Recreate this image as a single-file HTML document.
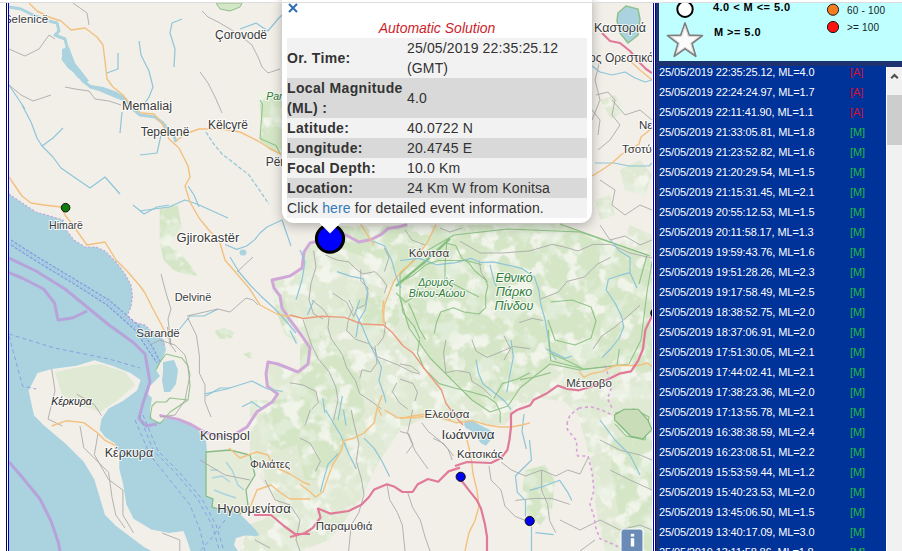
<!DOCTYPE html>
<html><head><meta charset="utf-8">
<style>
*{box-sizing:border-box}
html,body{margin:0;padding:0}
body{width:902px;height:551px;overflow:hidden;background:#fff;position:relative;font-family:"Liberation Sans",sans-serif}
.abs{position:absolute}
#topline{left:0;top:2px;width:902px;height:1px;background:#dcdcdc;z-index:10}
#map{left:9px;top:3px;width:643px;height:548px;background:#f2efe9;overflow:hidden}
#side{left:655px;top:3px;width:247px;height:548px;overflow:hidden}
#popup{left:282px;top:-10px;width:310px;height:233px;background:#fff;border-radius:12px;box-shadow:0 3px 12px rgba(0,0,0,0.28)}
#tip{left:321px;top:223px;width:18px;height:10px}
.ptab{position:absolute;left:287px;top:18px;width:300px;border-collapse:collapse;font-size:14px;line-height:20px;color:#333}
.ptab td{padding:0;vertical-align:middle}
.ptab td.k{width:120px;font-weight:bold;letter-spacing:0.35px}
.ptab td.v{letter-spacing:0.15px}
.ptab tr.l td{background:#f2f2f2}
.ptab tr.d td{background:#d9d9d9}
#list{left:659px;top:66px;width:243px;height:485px;background:#003399;overflow:hidden}
.row{position:absolute;left:0;height:20px;font-size:11px;line-height:20px;color:#fff;white-space:nowrap;letter-spacing:-0.13px}
.row b{font-weight:normal;position:absolute;left:191px;top:0}
.A{color:#d0103a}
.M{color:#22bb44}
</style></head>
<body>
<div id="topline" class="abs"></div>
<div class="abs" style="left:6px;top:3px;width:1px;height:548px;background:#000066"></div>
<div class="abs" style="left:8px;top:3px;width:1px;height:548px;background:#0000aa"></div>
<div id="map" class="abs">
<svg width="643" height="548" viewBox="9 3 643 548" style="position:absolute;left:0;top:0">
<path d="M310,243 L330,226 L560,224 L600,238 L648,257 L652,262 L652,551 L605,551 L596,510 L592,470 L585,440 L578,415 L565,402 L540,398 L520,405 L505,425 L470,425 L440,420 L420,420 L400,430 L380,460 L360,500 L330,540 L300,551 L240,551 L250,524 L262,520 L280,510 L290,470 L270,440 L247,427 L257,411.8 L272.5,401.7 L277.6,394 L267.4,386.4 L266,373.7 L268.7,361 L282.6,366 L298,373.7 L308,363.5 L310.6,348.3 L303,333 L292.8,320.3 L282.6,307.6 L280,296 L274,288 L272,280 L290,276 L302,268 L304,252 Z" fill="#e0e9d3"/>
<path d="M600,100 L615,95 L625,110 L612,120 Z" fill="#e0e9d3"/>
<path d="M620,170 L640,160 L652,175 L645,195 L625,190 Z" fill="#e0e9d3"/>
<path d="M595,200 L610,195 L615,215 L600,220 Z" fill="#e0e9d3"/>
<path d="M630,225 L652,235 L652,257 L620,245 Z" fill="#e0e9d3"/>
<path d="M250,400 L276,400 L290,420 L300,450 L300,500 L280,505 L262,480 L250,455 Z" fill="#e0e9d3"/>
<path d="M400,274 L418,256 L454,235 L508,229 L580,232 L648,257 L652,262 L652,380 L629,364 L580,370 L550,364 L520,388 L508,406 L490,412 L472,400 L454,382 L430,358 L409,328 L400,298 Z" fill="#d5e6c7"/>
<path d="M330,226 L560,224 L600,238 L648,257 L580,232 L508,229 L454,235 L418,256 L400,274 L380,262 L350,252 L330,244 Z" fill="#d5e6c7"/>
<path d="M300,345 L320,335 L345,350 L360,380 L365,410 L350,440 L335,460 L320,480 L305,480 L296,440 L300,400 Z" fill="#d5e6c7"/>
<path d="M340,300 L380,296 L396,300 L400,320 L390,335 L370,330 L350,320 Z" fill="#d5e6c7"/>
<path d="M610,440 L652,430 L652,551 L630,551 L620,520 L612,480 Z" fill="#d5e6c7"/>
<path d="M525,470 L545,465 L555,480 L552,510 L540,525 L528,515 L522,495 Z" fill="#d5e6c7"/>
<path d="M214,331 L224,328 L234,332 L232,338 L220,339 Z" fill="#d5e6c7"/>
<path d="M243,354 L250,352 L255,356 L250,359 Z" fill="#d5e6c7"/>
<path d="M159.7,209 L170,206 L178,205.4 L181.5,227 L176,235 L170.6,241.7 L180,252 L188.8,263.5 L197.8,276 L186,274 L174.2,270.7 L163.4,259.8 L159.7,241.7 Z" fill="#d5e6c7"/>
<path d="M258,91 L282,91 L282,156 L270,150 L260,141 L262,127 Z" fill="#d5e6c7"/>
<path d="M262,402 L290,398 L300,420 L296,445 L280,450 L265,440 Z" fill="#d5e6c7"/>
<path d="M272,290 L285,300 L292,330 L300,345 L285,335 L276,310 Z" fill="#d5e6c7"/>
<defs><filter id="mot" x="9" y="3" width="643" height="548" filterUnits="userSpaceOnUse"><feTurbulence type="fractalNoise" baseFrequency="0.06" numOctaves="3" seed="7"/><feColorMatrix type="matrix" values="0 0 0 0 0.949 0 0 0 0 0.937 0 0 0 0 0.914 7 0 0 0 -3.6"/></filter><clipPath id="gclip"><path d="M310,243 L330,226 L560,224 L600,238 L648,257 L652,262 L652,551 L605,551 L596,510 L592,470 L585,440 L578,415 L565,402 L540,398 L520,405 L505,425 L470,425 L440,420 L420,420 L400,430 L380,460 L360,500 L330,540 L300,551 L240,551 L250,524 L262,520 L280,510 L290,470 L270,440 L247,427 L257,411.8 L272.5,401.7 L277.6,394 L267.4,386.4 L266,373.7 L268.7,361 L282.6,366 L298,373.7 L308,363.5 L310.6,348.3 L303,333 L292.8,320.3 L282.6,307.6 L280,296 L274,288 L272,280 L290,276 L302,268 L304,252 Z"/><path d="M600,100 L615,95 L625,110 L612,120 Z"/><path d="M620,170 L640,160 L652,175 L645,195 L625,190 Z"/><path d="M595,200 L610,195 L615,215 L600,220 Z"/><path d="M630,225 L652,235 L652,257 L620,245 Z"/><path d="M250,400 L276,400 L290,420 L300,450 L300,500 L280,505 L262,480 L250,455 Z"/><path d="M400,274 L418,256 L454,235 L508,229 L580,232 L648,257 L652,262 L652,380 L629,364 L580,370 L550,364 L520,388 L508,406 L490,412 L472,400 L454,382 L430,358 L409,328 L400,298 Z"/><path d="M330,226 L560,224 L600,238 L648,257 L580,232 L508,229 L454,235 L418,256 L400,274 L380,262 L350,252 L330,244 Z"/><path d="M300,345 L320,335 L345,350 L360,380 L365,410 L350,440 L335,460 L320,480 L305,480 L296,440 L300,400 Z"/><path d="M340,300 L380,296 L396,300 L400,320 L390,335 L370,330 L350,320 Z"/><path d="M610,440 L652,430 L652,551 L630,551 L620,520 L612,480 Z"/><path d="M525,470 L545,465 L555,480 L552,510 L540,525 L528,515 L522,495 Z"/><path d="M214,331 L224,328 L234,332 L232,338 L220,339 Z"/><path d="M243,354 L250,352 L255,356 L250,359 Z"/><path d="M159.7,209 L170,206 L178,205.4 L181.5,227 L176,235 L170.6,241.7 L180,252 L188.8,263.5 L197.8,276 L186,274 L174.2,270.7 L163.4,259.8 L159.7,241.7 Z"/><path d="M258,91 L282,91 L282,156 L270,150 L260,141 L262,127 Z"/><path d="M262,402 L290,398 L300,420 L296,445 L280,450 L265,440 Z"/><path d="M272,290 L285,300 L292,330 L300,345 L285,335 L276,310 Z"/></clipPath></defs>
<rect x="9" y="3" width="643" height="548" filter="url(#mot)" clip-path="url(#gclip)" opacity="0.75"/>
<defs><filter id="mot2" x="9" y="3" width="643" height="548" filterUnits="userSpaceOnUse"><feTurbulence type="fractalNoise" baseFrequency="0.05" numOctaves="3" seed="21"/><feColorMatrix type="matrix" values="0 0 0 0 0.80 0 0 0 0 0.88 0 0 0 0 0.75 7 0 0 0 -3.7"/></filter></defs>
<rect x="9" y="3" width="643" height="548" filter="url(#mot2)" clip-path="url(#gclip)" opacity="0.6"/>
<path d="M9,194 L22,203 L36,212 L50,216 L63,220 L67,231 L74,240 L85,247 L96,247 L105,251 L116,262 L125,274 L131,285 L132.5,296 L131,307 L127,316 L132.5,322 L145,325 L152,332 L160,336 L164,340 L166,350 L162,360 L156,370 L160,376 L150,386 L148,394 L152,398 L150,410 L152,420 L160,422 L170,416 L182,420 L196,426 L201,435 L206,441 L207,452 L206,463 L206,482 L206,496 L213,499 L212,507 L219,509 L230.5,510 L240.6,514.6 L248,522 L255,529 L259.4,535 L256.5,536 L245,535.5 L236,538 L234,545 L238,551 L9,551 Z" fill="#aad3df"/>
<path d="M34,380 L37.5,373 L51.7,369 L76.6,365.7 L94.4,360.3 L112,365.7 L130,372.8 L140.7,380 L137,390.6 L122.9,401 L108.6,408.4 L101.5,419 L99.7,429.7 L105,436.9 L115.8,444 L119.3,454.6 L119.3,468.9 L122.9,483 L126.4,504.5 L133.6,518.7 L151.3,529.4 L169,533 L183.4,531 L187,540 L190.5,551 L151.3,551 L144,547 L130,536.5 L115.8,525.8 L105,515 L99.7,497.3 L94.4,479.6 L83.7,461.8 L66,444 L44.6,426 L34,415.5 L28.6,390.6 Z" fill="#f2efe9"/>
<path d="M55,372 L80,367 L100,364 L125,372 L135,385 L118,400 L100,412 L80,405 L62,395 Z" fill="#e0e9d3"/>
<path d="M206,452 L230,450 L250,455 L255,475 L246,490 L248,505 L240,514 L230,510 L219,509 L212,507 L213,499 L206,496 L206,463 Z" fill="#e4ebd8" stroke="#86bd86" stroke-width="1.3"/>
<path d="M210,470 L218,470" fill="none" stroke="#aad3df" stroke-width="1.4"/>
<path d="M212,478 L222,476 L230,482" fill="none" stroke="#aad3df" stroke-width="1.4"/>
<path d="M214,490 L224,494 L236,498" fill="none" stroke="#aad3df" stroke-width="1.4"/>
<path d="M226,462 L232,470 L238,485 L244,490" fill="none" stroke="#aad3df" stroke-width="1.4"/>
<path d="M163,362 L174,360 L178,370 L176,384 L170,392 L164,392 L162,380 L163,372 Z" fill="#aad3df"/>
<path d="M463.8,424 L467,420.3 L473.4,421.6 L481,425.4 L488.6,429.2 L493.7,433 L491,439.4 L486,445.7 L481,443.2 L476,436.8 L470.8,430.5 L465.7,428 Z" fill="#aad3df"/>
<path d="M618,13 L626,6 L638,9 L640,19 L638,35 L628,43 L620,33 L617,21 Z" fill="#aad3df" stroke="#8cc08c" stroke-width="1.5"/>
<path d="M216,3 L220,9 L230,11 L240,7 L242,3 Z" fill="#d5e6c7" stroke="#8cc08c" stroke-width="1"/>
<ellipse cx="243" cy="252.5" rx="3.5" ry="3" fill="#aad3df"/>
<path d="M9,7 L21,9 L33,15 L49,21 L57,23 L59,31 L55,35 L65,39 L67,47 L63,59 L69,67 L77,73 L83,81 L91,87 L103,89 L115,93 L125,99 L133,109 L140,115 L155,117 L162.7,122.7 L170,132 L174,136 L176,142" fill="none" stroke="#aad3df" stroke-width="3" stroke-linejoin="round"/>
<path d="M62,49 L69,47 L75,63 L83,73 L89,81 L85,83 L77,77 L69,67 L62,59 Z" fill="#aad3df"/>
<path d="M91,85 L103,87 L117,92 L125,97 L123,101 L113,97 L99,91 L89,88 Z" fill="#aad3df"/>
<path d="M22,105 L31,122 L37,138 L42,146 L53,157 L61,168 L74,177 L90,188 L105,177 L120,194" fill="none" stroke="#8ec5d8" stroke-width="1.2" stroke-linejoin="round"/>
<path d="M42,146 L53,138 L63,128" fill="none" stroke="#8ec5d8" stroke-width="1.2" stroke-linejoin="round"/>
<path d="M139,41 L141,55 L149,71 L153,87 L149,97 L145,103" fill="none" stroke="#8ec5d8" stroke-width="1.2" stroke-linejoin="round"/>
<path d="M118,53 L118,69 L107,73" fill="none" stroke="#8ec5d8" stroke-width="1.2" stroke-linejoin="round"/>
<path d="M9,85 L17,97 L25,109" fill="none" stroke="#8ec5d8" stroke-width="1.2" stroke-linejoin="round"/>
<path d="M182,19 L172,23 L170,33 L175,49 L174,67" fill="none" stroke="#8ec5d8" stroke-width="1.2" stroke-linejoin="round"/>
<path d="M240,29 L256,23 L268,31 L278,19 L282,15" fill="none" stroke="#8ec5d8" stroke-width="1.2" stroke-linejoin="round"/>
<path d="M122,112 L120,133" fill="none" stroke="#8ec5d8" stroke-width="1.2" stroke-linejoin="round"/>
<path d="M161,135 L157,153 L140,155" fill="none" stroke="#8ec5d8" stroke-width="1.2" stroke-linejoin="round"/>
<path d="M140,211 L154,209 L169,207 L185,200 L197,204 L208,209 L228,218" fill="none" stroke="#8ec5d8" stroke-width="1.2" stroke-linejoin="round"/>
<path d="M188,186 L194,195 L199,207" fill="none" stroke="#8ec5d8" stroke-width="1.2" stroke-linejoin="round"/>
<path d="M225,244.5 L236.8,249.4 L246.6,246 L254.8,239.6 L260,233 L267,227 L282,220 L291,246" fill="none" stroke="#8ec5d8" stroke-width="1.2" stroke-linejoin="round"/>
<path d="M230,257 L239,272 L251,286 L263,298 L275,309 L286,321 L296,333" fill="none" stroke="#8ec5d8" stroke-width="1.2" stroke-linejoin="round"/>
<path d="M178,331 L190,316 L204,316 L218,309" fill="none" stroke="#8ec5d8" stroke-width="1.2" stroke-linejoin="round"/>
<path d="M133,205 L144,214 L157,207 L169,205" fill="none" stroke="#8ec5d8" stroke-width="1.2" stroke-linejoin="round"/>
<path d="M206,132 L213,143 L222,154 L235,164 L249,175 L260,191 L269,204" fill="none" stroke="#8ec5d8" stroke-width="1.2" stroke-dasharray="4 2"/>
<path d="M73,3 L87,13 L89,25" fill="none" stroke="#a6a6a6" stroke-width="0.85" stroke-linejoin="round"/>
<path d="M9,49 L25,56 L39,49 L49,35 L55,39" fill="none" stroke="#a6a6a6" stroke-width="0.85" stroke-linejoin="round"/>
<path d="M65,87 L75,89 L89,91 L95,99 L109,101 L121,105" fill="none" stroke="#a6a6a6" stroke-width="0.85" stroke-linejoin="round"/>
<path d="M9,85 L21,95 L33,101 L51,95" fill="none" stroke="#a6a6a6" stroke-width="0.85" stroke-linejoin="round"/>
<path d="M202,11 L208,17 L220,23 L230,29 L242,37 L252,45 L258,57 L262,67 L268,73 L280,69" fill="none" stroke="#a6a6a6" stroke-width="0.85" stroke-linejoin="round"/>
<path d="M200,72 L208,83 L216,99 L222,113" fill="none" stroke="#a6a6a6" stroke-width="0.85" stroke-linejoin="round"/>
<path d="M161,274 L166,293 L171,309 L168,319 L171,345" fill="none" stroke="#a6a6a6" stroke-width="0.85" stroke-linejoin="round"/>
<path d="M187,316 L218,309 L230,312 L246,298 L253,300 L258,305" fill="none" stroke="#a6a6a6" stroke-width="0.85" stroke-linejoin="round"/>
<path d="M237,272 L253,257" fill="none" stroke="#a6a6a6" stroke-width="0.85" stroke-linejoin="round"/>
<path d="M166,354 L182,358 L188,366 L190,386 L188,400 L170,398 L166,402 L156,402 L152,406 L150,418 L160,424 L170,412 L188,400" fill="none" stroke="#88bf80" stroke-width="1.1" stroke-linejoin="round" opacity="0.9"/>
<path d="M166,354 L160,362 L156,370" fill="none" stroke="#88bf80" stroke-width="1.1" stroke-linejoin="round" opacity="0.9"/>
<path d="M262.5,104.5 L260,138.6 L276,145.4 L280.7,154.5" fill="none" stroke="#88bf80" stroke-width="1.1" stroke-linejoin="round" opacity="0.9"/>
<path d="M260,100 L262.5,104.5" fill="none" stroke="#88bf80" stroke-width="1.1" stroke-linejoin="round" opacity="0.9"/>
<path d="M396,286 L427,260 L450,238.6" fill="none" stroke="#88bf80" stroke-width="1.1" stroke-linejoin="round" opacity="0.9"/>
<path d="M400,274 L418,256 L454,235 L508,229 L580,232 L650,256" fill="none" stroke="#88bf80" stroke-width="1.1" stroke-linejoin="round" opacity="0.9"/>
<path d="M400,274 L400,298 L409,328 L430,358 L454,382 L472,400 L490,412 L508,406 L520,388 L550,364 L580,370 L629,364 L641,340 L647,292 L652,262" fill="none" stroke="#88bf80" stroke-width="1.1" stroke-linejoin="round" opacity="0.9"/>
<path d="M551,302 L572,300 L591,307 L596,321 L591,338 L575,345 L555,340 L548,320" fill="none" stroke="#88bf80" stroke-width="1.1" stroke-linejoin="round" opacity="0.9"/>
<path d="M615,413 L634,409 L649,417 L645,440 L626,436 L615,424" fill="none" stroke="#88bf80" stroke-width="1.1" stroke-linejoin="round" opacity="0.9"/>
<path d="M560,224 L647,255 L639,284" fill="none" stroke="#88bf80" stroke-width="1.1" stroke-linejoin="round" opacity="0.9"/>
<path d="M396,286 L427,260 L450,238.6" fill="none" stroke="#7dbb78" stroke-width="2.6" opacity="0.8"/>
<path d="M406,225 L398,227 L388,228.5 L381,234.6 L371,239.5 L359,242 L345,234.6 L330,238 L310,243 L304,252 L302,268 L290,276 L272,280 L274,288 L280,296 L282,308 L290,320 L302,336 L310,348 L308,364 L298,372 L278,364 L268,362 L266,373.7 L267.4,386.4 L277.6,394 L272.5,401.7 L257,411.8 L247,427 L234,434.7 L221.7,437 L204,432 L191,424.5 L178.5,419.4 L160.7,415.6" fill="none" stroke="#cfa8d7" stroke-width="3" stroke-linejoin="round" stroke-linecap="round"/>
<path d="M9,258 L36,271 L65,289 L87,307 L109,325 L134,343 L145,354 L150,382 L142.7,404 L139,418.5 L146,426 L157,424" fill="none" stroke="#b89ad8" stroke-width="3" stroke-linejoin="round" opacity="0.85"/>
<path d="M9,272.6 L22,278 L43.6,289 L54.5,303 L58,320 L72.6,318 L87,311" fill="none" stroke="#b89ad8" stroke-width="3" stroke-linejoin="round" opacity="0.85"/>
<path d="M9,462 L22,477 L40,499 L51,521 L58.5,543 L60,551" fill="none" stroke="#b89ad8" stroke-width="3" stroke-linejoin="round" opacity="0.85"/>
<path d="M11,240 L36,256 L72.6,278 L109,300 L138,325 L152.5,347 L160,361.5" fill="none" stroke="#7f9de0" stroke-width="1.2" stroke-dasharray="3 1.5"/>
<path d="M11,245 L36,261 L72.6,283 L107,305 L135,330 L149,351 L157,363" fill="none" stroke="#7f9de0" stroke-width="1.2" stroke-dasharray="3 1.5"/>
<path d="M11,242.5 L36,258.5 L72.6,280.5 L108,302.5 L136.5,327.5 L151,349 L158.5,362" fill="none" stroke="#9db4e6" stroke-width="3.5" stroke-dasharray="1 2" opacity="0.7"/>
<path d="M9,194 L22,203 L36,212 L50,216 L63,220 L67,231 L74,240 L85,247 L96,247 L105,251 L116,262 L125,274 L131,285 L132.5,296 L131,307 L127,316 L132.5,322 L145,325 L152,332 L160,338 L165,347" fill="none" stroke="#c4a0d8" stroke-width="1.2" stroke-dasharray="2 2" opacity="0.9"/>
<path d="M139,415 L153.7,451 L175.6,473 L197.6,499 L212,524.7 L219.5,551" fill="none" stroke="#8aa0e0" stroke-width="1" stroke-dasharray="4 3"/>
<path d="M143,415 L158,451 L180,473 L202,499 L216,524.7 L224,551" fill="none" stroke="#8aa0e0" stroke-width="1" stroke-dasharray="4 3"/>
<path d="M135,420 L150,455 L170,480 L190,505 L200,530 L205,551" fill="none" stroke="#8aa0e0" stroke-width="1" stroke-dasharray="4 3"/>
<path d="M225,520 L210,540 L200,551" fill="none" stroke="#8aa0e0" stroke-width="1" stroke-dasharray="4 3"/>
<path d="M9,334 L54.5,348 L109,359 L140,368" fill="none" stroke="#8aa0e0" stroke-width="1" stroke-dasharray="4 3"/>
<path d="M9,336 L22.6,386 L36,389" fill="none" stroke="#8aa0e0" stroke-width="1" stroke-dasharray="4 3"/>
<path d="M29,3 L37,11 L49,17 L61,21 L71,30 L85,28 L97,37 L103,45 L105,61 L107,79 L113,87 L123,95 L129,103 L141,113 L154,114 L163,125 L169,139 L179,148 L188,166 L190,177 L185,186 L190,202 L199,218 L208,229 L220,243 L225,260 L237,274 L249,288 L260,305 L277,314 L286,316 L290,316" fill="none" stroke="#f3c07e" stroke-width="1.4" stroke-linejoin="round"/>
<path d="M176,141 L185,134 L199,129 L208,129 L222,129 L240,132 L258,141 L269,148 L281,154" fill="none" stroke="#f3c07e" stroke-width="1.4" stroke-linejoin="round"/>
<path d="M9,177 L13,183 L22,196 L31,203 L44,205 L61,207 L65,215 L72,224 L87,245 L105,242 L116,260 L127,271 L140,286 L145,293 L152,307 L161,324 L168,338" fill="none" stroke="#f3c07e" stroke-width="1.4" stroke-linejoin="round"/>
<path d="M383,323.6 L384.4,304.7 L394,281 L401,271.6 L412.7,262 L427,243 L436,224.4" fill="none" stroke="#f3c07e" stroke-width="1.4" stroke-linejoin="round"/>
<path d="M360.8,224.4 L370,238.6 L374,245" fill="none" stroke="#f3c07e" stroke-width="1.4" stroke-linejoin="round"/>
<path d="M229,448 L240,458 L257,452 L268,455 L273,466 L290,474 L303,482 L310,485" fill="none" stroke="#f3c07e" stroke-width="1.4" stroke-linejoin="round"/>
<path d="M249,510 L257,490 L271,485 L281,493 L290,499 L310,499" fill="none" stroke="#f3c07e" stroke-width="1.4" stroke-linejoin="round"/>
<path d="M630,61 L640,70 L652,80" fill="none" stroke="#f3c07e" stroke-width="1.4" stroke-linejoin="round"/>
<path d="M187.8,318 L196.5,335.5 L199.4,355.8 L199.4,373.3 L205,385 L205,402 L211,417" fill="none" stroke="#a6a6a6" stroke-width="0.85" stroke-linejoin="round"/>
<path d="M167.4,327 L170,344 L176,352" fill="none" stroke="#a6a6a6" stroke-width="0.85" stroke-linejoin="round"/>
<path d="M313.6,250.4 L316,267 L311,283.4 L309,300 L313.6,314 L323,318.8" fill="none" stroke="#a6a6a6" stroke-width="0.85" stroke-linejoin="round"/>
<path d="M325.4,255 L337,260 L349,262 L356,269 L363,274 L375,271.6 L382,278.7 L386.8,285.8 L384.4,293" fill="none" stroke="#a6a6a6" stroke-width="0.85" stroke-linejoin="round"/>
<path d="M384.4,248 L389,257.5 L384.4,271.6" fill="none" stroke="#a6a6a6" stroke-width="0.85" stroke-linejoin="round"/>
<path d="M360.8,269.3 L360.8,281 L368,288 L365.5,304.7 L356,309.4 L353.7,316.5" fill="none" stroke="#a6a6a6" stroke-width="0.85" stroke-linejoin="round"/>
<path d="M332.5,293 L346.6,302.3 L353.7,316.5" fill="none" stroke="#a6a6a6" stroke-width="0.85" stroke-linejoin="round"/>
<path d="M405,230 L412,240 L425,245" fill="none" stroke="#a6a6a6" stroke-width="0.85" stroke-linejoin="round"/>
<path d="M440,228 L450,232 L462,228" fill="none" stroke="#a6a6a6" stroke-width="0.85" stroke-linejoin="round"/>
<path d="M596,95 L608,92 L615,100 L612,115 L620,125 L610,140 L598,150" fill="none" stroke="#a6a6a6" stroke-width="0.85" stroke-linejoin="round"/>
<path d="M592,110 L600,120 L598,135" fill="none" stroke="#a6a6a6" stroke-width="0.85" stroke-linejoin="round"/>
<path d="M51.7,369 L55,390.6 L48,419 L62.4,426" fill="none" stroke="#a6a6a6" stroke-width="0.85" stroke-linejoin="round"/>
<path d="M80,426 L83.7,447.5 L98,461.8 L108.6,472.4 L112,497.3 L115.8,515 L125,528" fill="none" stroke="#a6a6a6" stroke-width="0.85" stroke-linejoin="round"/>
<path d="M98,433.3 L94.4,454.6 L108.6,479.6 L122.9,490 L122.9,515 L133.6,533" fill="none" stroke="#a6a6a6" stroke-width="0.85" stroke-linejoin="round"/>
<path d="M76.6,394 L94.4,404.8 L101.5,415.5" fill="none" stroke="#a6a6a6" stroke-width="0.85" stroke-linejoin="round"/>
<path d="M162,533 L179.8,540 L179.8,551" fill="none" stroke="#a6a6a6" stroke-width="0.85" stroke-linejoin="round"/>
<path d="M150,345 L160,340 L175,345 L185,355 L190,375 L185,400 L175,415 L160,417" fill="none" stroke="#a6a6a6" stroke-width="0.85" stroke-linejoin="round"/>
<path d="M460,241.3 L475,249.8 L480,253 L501.8,253 L530,250.9 L551.8,244.4 L562.7,246.5 L578,250.9 L593.2,244.4 L610.6,244.4 L630,253 L652,258" fill="none" stroke="#a6a6a6" stroke-width="0.85" stroke-linejoin="round"/>
<path d="M541,298.8 L558.4,292.2 L567,281.4 L584.5,277 L597.5,264 L610.6,257.4" fill="none" stroke="#a6a6a6" stroke-width="0.85" stroke-linejoin="round"/>
<path d="M519.2,322.7 L532.2,318.4 L543,320.5" fill="none" stroke="#a6a6a6" stroke-width="0.85" stroke-linejoin="round"/>
<path d="M504,335.8 L510.5,348.8 L504,360" fill="none" stroke="#a6a6a6" stroke-width="0.85" stroke-linejoin="round"/>
<path d="M593,349 L602,335.8 L615,327 L628,316 L640,305.3" fill="none" stroke="#a6a6a6" stroke-width="0.85" stroke-linejoin="round"/>
<path d="M311.8,300 L322.7,308.7 L329,317.4 L328,328 L331.4,339 L342.3,354.5 L346.6,367.5 L355.4,380.6 L359.7,393.7 L372.8,402.4 L381.5,409" fill="none" stroke="#a6a6a6" stroke-width="0.85" stroke-linejoin="round"/>
<path d="M303,319.6 L307.4,332.7 L311.8,345.7 L318.3,358.8 L329.2,372 L335.8,387 L338,400 L333.6,420" fill="none" stroke="#a6a6a6" stroke-width="0.85" stroke-linejoin="round"/>
<path d="M348.8,300 L353.2,308.7 L348.8,317.4 L346.6,330.5 L355.4,339.2 L368.4,343.6 L375,350 L377,356.6 L388,361 L399,365.4 L412,372 L420,374" fill="none" stroke="#a6a6a6" stroke-width="0.85" stroke-linejoin="round"/>
<path d="M375,345.8 L377,363 L370.6,372 L362,369.7 L359.7,378.4" fill="none" stroke="#a6a6a6" stroke-width="0.85" stroke-linejoin="round"/>
<path d="M385.9,321.8 L383.7,337 L377,345.8" fill="none" stroke="#a6a6a6" stroke-width="0.85" stroke-linejoin="round"/>
<path d="M290,382.8 L303,385 L316,391.5 L318.3,402.4 L311.8,409" fill="none" stroke="#a6a6a6" stroke-width="0.85" stroke-linejoin="round"/>
<path d="M396.8,382.8 L392.4,391.5 L399,402.4 L407.6,409" fill="none" stroke="#a6a6a6" stroke-width="0.85" stroke-linejoin="round"/>
<path d="M400,364 L411,366 L419.6,372.7" fill="none" stroke="#a6a6a6" stroke-width="0.85" stroke-linejoin="round"/>
<path d="M400,379 L413,383.6 L417.4,392.3 L415,401" fill="none" stroke="#a6a6a6" stroke-width="0.85" stroke-linejoin="round"/>
<path d="M445.8,340 L443.6,353 L445.8,372.7 L456.6,370.5 L469.7,372.7 L472,381.4 L482.8,388 L491.5,396.6" fill="none" stroke="#a6a6a6" stroke-width="0.85" stroke-linejoin="round"/>
<path d="M472,340 L476,351 L487,357.4 L498,353 L513.3,346.5 L530,348.7" fill="none" stroke="#a6a6a6" stroke-width="0.85" stroke-linejoin="round"/>
<path d="M421.8,422.8 L428.3,431.5 L439.2,440.2 L448,449 L452.3,460" fill="none" stroke="#a6a6a6" stroke-width="0.85" stroke-linejoin="round"/>
<path d="M400,431.5 L408.7,433.7 L413,444.6 L406.5,453.3" fill="none" stroke="#a6a6a6" stroke-width="0.85" stroke-linejoin="round"/>
<path d="M489,466 L491,480 L501,490 L505,506.4 L515.4,516.5 L525.5,520.5" fill="none" stroke="#a6a6a6" stroke-width="0.85" stroke-linejoin="round"/>
<path d="M501,462 L511.4,470 L525.5,476 L541.6,470 L555.7,476 L567.8,470 L580,474 L588,458" fill="none" stroke="#a6a6a6" stroke-width="0.85" stroke-linejoin="round"/>
<path d="M541.6,470 L541.6,490.3 L547.6,504.4 L549.6,520.5 L555.7,532.6" fill="none" stroke="#a6a6a6" stroke-width="0.85" stroke-linejoin="round"/>
<path d="M515.4,500.4 L535.5,498.4 L551.7,498.4 L569.8,504.4" fill="none" stroke="#a6a6a6" stroke-width="0.85" stroke-linejoin="round"/>
<path d="M351.2,410 L353.8,422.8 L358.9,443.3 L356.3,461.2 L361.4,479 L364,494.5 L358.9,512.4 L351.2,525.2 L348.6,551" fill="none" stroke="#a6a6a6" stroke-width="0.85" stroke-linejoin="round"/>
<path d="M387,484.2 L389.6,499.6 L397.3,512.4 L402.4,525.2 L405,551" fill="none" stroke="#a6a6a6" stroke-width="0.85" stroke-linejoin="round"/>
<path d="M407.5,492 L412.6,507.3 L420.3,520 L425.4,538 L430,551" fill="none" stroke="#a6a6a6" stroke-width="0.85" stroke-linejoin="round"/>
<path d="M412.6,410 L407.5,433 L415.2,451 L428,468.9" fill="none" stroke="#a6a6a6" stroke-width="0.85" stroke-linejoin="round"/>
<path d="M433,438.2 L443.4,443.3 L453.6,456" fill="none" stroke="#a6a6a6" stroke-width="0.85" stroke-linejoin="round"/>
<path d="M300,438.2 L310.2,443.3 L320.5,461.2 L315.4,471.4" fill="none" stroke="#a6a6a6" stroke-width="0.85" stroke-linejoin="round"/>
<path d="M310.2,410 L305,425.4" fill="none" stroke="#a6a6a6" stroke-width="0.85" stroke-linejoin="round"/>
<path d="M479,260.5 L481.4,273.4 L487.8,282" fill="none" stroke="#a6a6a6" stroke-width="0.85" stroke-linejoin="round"/>
<path d="M600,225 L610,240 L625,236 L640,245 L652,240" fill="none" stroke="#a6a6a6" stroke-width="0.85" stroke-linejoin="round"/>
<path d="M600,440 L620,450 L640,455 L652,460" fill="none" stroke="#a6a6a6" stroke-width="0.85" stroke-linejoin="round"/>
<path d="M560,520 L580,530 L600,520 L620,530 L640,525 L652,530" fill="none" stroke="#a6a6a6" stroke-width="0.85" stroke-linejoin="round"/>
<path d="M595,540 L580,551" fill="none" stroke="#a6a6a6" stroke-width="0.85" stroke-linejoin="round"/>
<path d="M610,470 L630,480 L652,490" fill="none" stroke="#a6a6a6" stroke-width="0.85" stroke-linejoin="round"/>
<path d="M265,480 L275,500 L290,505 L300,520 L296,540 L300,551" fill="none" stroke="#a6a6a6" stroke-width="0.85" stroke-linejoin="round"/>
<path d="M255,540 L270,548" fill="none" stroke="#a6a6a6" stroke-width="0.85" stroke-linejoin="round"/>
<path d="M200,460 L225,475 L250,480" fill="none" stroke="#a6a6a6" stroke-width="0.85" stroke-linejoin="round"/>
<path d="M600,60 L595,80 L600,100 L592,120" fill="none" stroke="#a6a6a6" stroke-width="0.85" stroke-linejoin="round"/>
<path d="M612,100 L625,115 L640,110 L652,120" fill="none" stroke="#a6a6a6" stroke-width="0.85" stroke-linejoin="round"/>
<path d="M600,180 L615,190 L612,205 L625,215 L640,205 L652,210" fill="none" stroke="#a6a6a6" stroke-width="0.85" stroke-linejoin="round"/>
<path d="M206,396 L220,388 L230,388" fill="none" stroke="#8ec5d8" stroke-width="1.2" stroke-linejoin="round"/>
<path d="M337,271.6 L351,276.4 L363,278.7 L368,293 L365.5,309.4 L358.4,321.2 L356,337.7" fill="none" stroke="#8ec5d8" stroke-width="1.2" stroke-linejoin="round"/>
<path d="M372.6,241 L384.4,245.7 L391.5,259.8 L396.2,276.4 L401,288" fill="none" stroke="#8ec5d8" stroke-width="1.2" stroke-linejoin="round"/>
<path d="M300,250 L305,262 L302,280 L296,300" fill="none" stroke="#8ec5d8" stroke-width="1.2" stroke-linejoin="round"/>
<path d="M592,66 L600,72 L612,75 L625,72 L635,78 L645,82 L652,80" fill="none" stroke="#8ec5d8" stroke-width="1.2" stroke-linejoin="round"/>
<path d="M204,394 L226.7,389 L252,381 L267.4,389 L282.6,391.5" fill="none" stroke="#8ec5d8" stroke-width="1.2" stroke-linejoin="round"/>
<path d="M242,406.7 L252,401.7 L262,409" fill="none" stroke="#8ec5d8" stroke-width="1.2" stroke-linejoin="round"/>
<path d="M359.7,300 L355.4,313 L362,326 L368.4,341.4 L375,354.5 L381.5,367.5 L379,380.6 L383.7,393.7 L385.9,402.4" fill="none" stroke="#8ec5d8" stroke-width="1.2" stroke-linejoin="round"/>
<path d="M314,300 L307.4,315" fill="none" stroke="#8ec5d8" stroke-width="1.2" stroke-linejoin="round"/>
<path d="M290,330.5 L296.5,343.6" fill="none" stroke="#8ec5d8" stroke-width="1.2" stroke-linejoin="round"/>
<path d="M342.3,395.9 L340,409 L338,420" fill="none" stroke="#8ec5d8" stroke-width="1.2" stroke-linejoin="round"/>
<path d="M322.7,398 L324.9,413" fill="none" stroke="#8ec5d8" stroke-width="1.2" stroke-linejoin="round"/>
<path d="M476,359.6 L478.4,372.7 L482.8,383.6 L493.7,392.3 L504.6,401 L511,409.7" fill="none" stroke="#8ec5d8" stroke-width="1.2" stroke-linejoin="round"/>
<path d="M511,340 L513.3,357.4 L509,379 L506.8,392.3" fill="none" stroke="#8ec5d8" stroke-width="1.2" stroke-linejoin="round"/>
<path d="M524,414 L522,431.5 L526.4,449" fill="none" stroke="#8ec5d8" stroke-width="1.2" stroke-linejoin="round"/>
<path d="M529.5,440 L531.5,460 L515.4,476 L517.4,492.4 L525.5,500.4 L525.5,516.5" fill="none" stroke="#8ec5d8" stroke-width="1.2" stroke-linejoin="round"/>
<path d="M529.5,490.3 L543.6,486.3 L559.7,480.3 L567.8,492.4 L571.8,500.4" fill="none" stroke="#8ec5d8" stroke-width="1.2" stroke-linejoin="round"/>
<path d="M531.5,526.6 L531.5,551" fill="none" stroke="#8ec5d8" stroke-width="1.2" stroke-linejoin="round"/>
<path d="M535.5,532.6 L553.7,534.6" fill="none" stroke="#8ec5d8" stroke-width="1.2" stroke-linejoin="round"/>
<path d="M325.6,410 L333.3,422.8 L341,435.6 L348.6,453.5 L356.3,469" fill="none" stroke="#8ec5d8" stroke-width="1.2" stroke-linejoin="round"/>
<path d="M343.5,410 L346,425.4" fill="none" stroke="#8ec5d8" stroke-width="1.2" stroke-linejoin="round"/>
<path d="M364,438.2 L374.2,448.4 L382,461.2 L389.6,476.6" fill="none" stroke="#8ec5d8" stroke-width="1.2" stroke-linejoin="round"/>
<path d="M338.4,453.5 L328.2,463.8 L323,481.7 L320.5,492" fill="none" stroke="#8ec5d8" stroke-width="1.2" stroke-linejoin="round"/>
<path d="M400,260.5 L419.3,258.4 L436.4,264.8 L455.7,262.7 L470.7,258.4 L481.4,262.7 L493,261.8 L521.4,268.3 L534.4,277 L538.8,290 L541,305.3 L545.3,320.5 L547.5,333.6 L549.7,349 L556,360" fill="none" stroke="#8ec5d8" stroke-width="1.2" stroke-linejoin="round"/>
<path d="M610.6,240 L619.3,250.9 L630,257.4 L630,272.7 L637,288" fill="none" stroke="#8ec5d8" stroke-width="1.2" stroke-linejoin="round"/>
<path d="M630,272.7 L621.5,274.8 L608.4,279.2 L606.2,290 L615,303 L621.5,316 L623.7,327 L619.3,338 L610.6,349 L602,357.6" fill="none" stroke="#8ec5d8" stroke-width="1.2" stroke-linejoin="round"/>
<path d="M490,264.8 L494.2,282 L496.4,286.2" fill="none" stroke="#8ec5d8" stroke-width="1.2" stroke-linejoin="round"/>
<path d="M546,349 L555.5,353.6 L565,358.4 L572,356" fill="none" stroke="#8ec5d8" stroke-width="1.2" stroke-linejoin="round"/>
<path d="M595,163 L614,163 L629,166 L649,166 L653,162" fill="none" stroke="#8ec5d8" stroke-width="1.2" stroke-linejoin="round"/>
<path d="M600,420 L615,440 L630,455 L640,475" fill="none" stroke="#8ec5d8" stroke-width="1.2" stroke-linejoin="round"/>
<path d="M396,293 L405.6,302 L412.7,297.6" fill="none" stroke="#88bf80" stroke-width="1.1" stroke-linejoin="round" opacity="0.9"/>
<path d="M447,243.4 L455.7,245.5 L462,258.4 L468.5,262.7 L475,271 L485.7,279.8 L487.8,286.2 L485.7,294.8 L485.7,307.7 L479,314 L464,312 L453.5,307.7 L440.7,312 L436.4,322.6 L434.3,333.3" fill="none" stroke="#88bf80" stroke-width="1.1" stroke-linejoin="round" opacity="0.9"/>
<path d="M400,282 L412.8,275.5 L425.7,264.8 L438.5,260.5 L466.4,260.5 L481.4,264.8" fill="none" stroke="#88bf80" stroke-width="1.1" stroke-linejoin="round" opacity="0.9"/>
<path d="M447,239 L445,264.8 L445,282 L453.5,284 L462,288.4 L479,297" fill="none" stroke="#88bf80" stroke-width="1.1" stroke-linejoin="round" opacity="0.9"/>
<path d="M408.6,303.4 L412.8,312 L419.3,329 L425.7,340" fill="none" stroke="#88bf80" stroke-width="1.1" stroke-linejoin="round" opacity="0.9"/>
<path d="M419.6,340 L417.4,353 L424,368.3 L439.2,383.6 L454.5,388 L472,392.3 L487,396.6 L495.9,403 L500.2,412 L500.2,422.8" fill="none" stroke="#88bf80" stroke-width="1.1" stroke-linejoin="round" opacity="0.9"/>
<path d="M493.7,398.8 L502.4,383.6 L517.6,379 L530,372.7" fill="none" stroke="#88bf80" stroke-width="1.1" stroke-linejoin="round" opacity="0.9"/>
<path d="M548.4,330 L550.7,360.7 L583.8,369 L617,365.5 L619.3,349" fill="none" stroke="#88bf80" stroke-width="1.1" stroke-linejoin="round" opacity="0.9"/>
<path d="M520,379.6 L534,377.3 L550.7,372.6" fill="none" stroke="#88bf80" stroke-width="1.1" stroke-linejoin="round" opacity="0.9"/>
<path d="M550.7,353.6 L567.3,360.7 L581.5,367.8" fill="none" stroke="#88bf80" stroke-width="1.1" stroke-linejoin="round" opacity="0.9"/>
<path d="M401,300 L403,313 L414,326 L420,339" fill="none" stroke="#88bf80" stroke-width="1.1" stroke-linejoin="round" opacity="0.9"/>
<path d="M51.7,426 L66,420.8 L83.7,422.6 L98,433.3 L105,440.4 L115.8,445.7" fill="none" stroke="#f3c07e" stroke-width="1.4" stroke-linejoin="round"/>
<path d="M400,418.4 L413,416 L426,414 L443.6,418.4 L456.6,422.8 L472,420.6 L487,425 L500.2,427 L511,427 L522,425 L530,422.8" fill="none" stroke="#f3c07e" stroke-width="1.4" stroke-linejoin="round"/>
<path d="M579,371.4 L583.8,377.3 L591,373.7 L602.7,371.4 L614.6,365.5 L626.4,365.5 L638.2,365.5 L647.7,363 L652,366.6" fill="none" stroke="#f3c07e" stroke-width="1.4" stroke-linejoin="round"/>
<path d="M467,440 L471,456 L473,474 L477,490.3 L479,506.4 L475,520.5 L469,532.6 L465,551" fill="none" stroke="#f3c07e" stroke-width="1.4" stroke-linejoin="round"/>
<path d="M300,484.2 L310.2,492 L315.4,497 L323,492 L328.2,476.6 L333.3,463.8 L341,451 L343.5,440.7 L353.8,438.2 L364,433 L374.2,422.8 L376.8,410 L382,395" fill="none" stroke="#f3c07e" stroke-width="1.4" stroke-linejoin="round"/>
<path d="M384.5,410 L397.3,417.7 L415.2,417.7 L433,415 L451,420.2" fill="none" stroke="#f3c07e" stroke-width="1.4" stroke-linejoin="round"/>
<path d="M383.7,300 L382.6,311 L384.8,324" fill="none" stroke="#f3c07e" stroke-width="1.4" stroke-linejoin="round"/>
<path d="M377,406.8 L381.5,415.5" fill="none" stroke="#f3c07e" stroke-width="1.4" stroke-linejoin="round"/>
<path d="M592,176 L602,170 L612,163 L622,154 L639,144 L641,137 L651,129" fill="none" stroke="#f3c07e" stroke-width="1.4" stroke-linejoin="round"/>
<path d="M290,315 L303,318.5 L322.7,316.3 L344.5,317.4 L362,324 L383.7,325 L392.4,332.7 L403,345.8 L413,353 L424,368.3 L432.7,379 L441.4,390 L445.8,403 L452.3,412 L458.8,420.6 L463,425" fill="none" stroke="#ec9a7c" stroke-width="1.4" stroke-linejoin="round"/>
<path d="M602,33 L610,41 L620,43 L630,51 L638,61 L646,69 L652,73" fill="none" stroke="#e07a98" stroke-width="2.2" stroke-linejoin="round"/>
<path d="M254,515 L271,515 L284,526 L295,534 L310,534" fill="none" stroke="#e07a98" stroke-width="2.2" stroke-linejoin="round"/>
<path d="M460,467.6 L448.5,471.4 L438.2,481.7 L428,479 L417.8,484.2 L412.6,492 L402.4,492 L394.7,486.8 L387,484.2 L374.2,489.4 L369,497 L361.4,504.7 L348.6,511 L330.7,513.7 L318,508.6 L320.5,517.5 L312.8,527.8 L305,533 L290,537" fill="none" stroke="#e07a98" stroke-width="2.2" stroke-linejoin="round"/>
<path d="M455,466 L467,462 L491,463 L501,458 L507.4,450 L509.4,440 L511,427 L511,414 L517.6,409.7 L530,405.4 L534,399.7 L546,393.8 L557.8,385.6 L567.3,389 L579,390.3 L591,386.7 L605,380.8 L619.3,373.7 L631,371.4 L638.2,360.7 L643,349 L645.3,330 L652,316" fill="none" stroke="#e07a98" stroke-width="2.2" stroke-linejoin="round"/>
<path d="M461,480 L469,490.3 L477,500.4 L481,508.5 L485,524.6 L487,536.7 L487,551" fill="none" stroke="#e07a98" stroke-width="2.2" stroke-linejoin="round"/>
<path d="M579,408 L591,406.8 L602.7,410.4 L612,415" fill="none" stroke="#d8a2d8" stroke-width="1.6" stroke-dasharray="3 3"/>
<path d="M567.3,422 L567.3,429.3 L576.7,441 L576.7,453 L577.8,456 L588,456 L592,472 L594,490.3 L590,504.4 L594,516.5 L596,528.6 L600,538.7 L615,545 L625,551" fill="none" stroke="#d8a2d8" stroke-width="1.6" stroke-dasharray="3 3"/>
<path d="M605,365.5 L612,386.7 L607.5,398.6 L612,408" fill="none" stroke="#d8a2d8" stroke-width="1.6" stroke-dasharray="3 3"/>
<path d="M579,408 L570,415 L567.3,422" fill="none" stroke="#d8a2d8" stroke-width="1.6" stroke-dasharray="3 3"/>
<path d="M614.6,415 L624,409.2 638.2,409.2 647.7,419.8 652,429.3 643,438.7 631,436.4 621.7,427 614.6,419.8 Z" fill="#c9ddb8" stroke="#7cb87a" stroke-width="1.1"/>
<circle cx="65.6" cy="207.7" r="4.3" fill="#0a7d0a" stroke="#111" stroke-width="1"/>
<circle cx="460.7" cy="476.8" r="4.6" fill="#0000ee" stroke="#111" stroke-width="1"/>
<circle cx="529.7" cy="521" r="4.6" fill="#0000ee" stroke="#111" stroke-width="1"/>
<circle cx="330" cy="238.6" r="13.6" fill="#0000ff" stroke="#000" stroke-width="3"/>
<circle cx="655" cy="313" r="4" fill="#0000ee" stroke="#000" stroke-width="1.5"/>
<text x="26" y="23" font-size="11.5" text-anchor="middle" fill="#3a3a3a" stroke="#fff" stroke-width="2.2" stroke-opacity="0.75" paint-order="stroke" stroke-linejoin="round">Selenicë</text>
<text x="241" y="39" font-size="12" text-anchor="middle" fill="#3a3a3a" stroke="#fff" stroke-width="2.2" stroke-opacity="0.75" paint-order="stroke" stroke-linejoin="round">Çorovodë</text>
<text x="147" y="110" font-size="12.5" text-anchor="middle" fill="#3a3a3a" stroke="#fff" stroke-width="2.2" stroke-opacity="0.75" paint-order="stroke" stroke-linejoin="round">Memaliaj</text>
<text x="165" y="136" font-size="12" text-anchor="middle" fill="#3a3a3a" stroke="#fff" stroke-width="2.2" stroke-opacity="0.75" paint-order="stroke" stroke-linejoin="round">Tepelenë</text>
<text x="228" y="129" font-size="12" text-anchor="middle" fill="#3a3a3a" stroke="#fff" stroke-width="2.2" stroke-opacity="0.75" paint-order="stroke" stroke-linejoin="round">Këlcyrë</text>
<text x="285" y="166" font-size="12" text-anchor="middle" fill="#3a3a3a" stroke="#fff" stroke-width="2.2" stroke-opacity="0.75" paint-order="stroke" stroke-linejoin="round">Përmet</text>
<text x="66" y="229" font-size="10.5" text-anchor="middle" fill="#3a3a3a" stroke="#fff" stroke-width="2.2" stroke-opacity="0.75" paint-order="stroke" stroke-linejoin="round">Himarë</text>
<text x="208" y="242" font-size="13" text-anchor="middle" fill="#3a3a3a" stroke="#fff" stroke-width="2.2" stroke-opacity="0.75" paint-order="stroke" stroke-linejoin="round">Gjirokastër</text>
<text x="193" y="301" font-size="11" text-anchor="middle" fill="#3a3a3a" stroke="#fff" stroke-width="2.2" stroke-opacity="0.75" paint-order="stroke" stroke-linejoin="round">Delvinë</text>
<text x="158" y="337" font-size="11.5" text-anchor="middle" fill="#3a3a3a" stroke="#fff" stroke-width="2.2" stroke-opacity="0.75" paint-order="stroke" stroke-linejoin="round">Sarandë</text>
<text x="71.5" y="404.5" font-size="10.5" text-anchor="middle" fill="#222" stroke="#fff" stroke-width="2.2" stroke-opacity="0.75" paint-order="stroke" stroke-linejoin="round" font-style="italic">Κέρκυρα</text>
<text x="129" y="457" font-size="12.5" text-anchor="middle" fill="#3a3a3a" stroke="#fff" stroke-width="2.2" stroke-opacity="0.75" paint-order="stroke" stroke-linejoin="round">Κέρκυρα</text>
<text x="225" y="440" font-size="13" text-anchor="middle" fill="#3a3a3a" stroke="#fff" stroke-width="2.2" stroke-opacity="0.75" paint-order="stroke" stroke-linejoin="round">Konispol</text>
<text x="270" y="468" font-size="11" text-anchor="middle" fill="#3a3a3a" stroke="#fff" stroke-width="2.2" stroke-opacity="0.75" paint-order="stroke" stroke-linejoin="round">Φιλιάτες</text>
<text x="254" y="513" font-size="13" text-anchor="middle" fill="#3a3a3a" stroke="#fff" stroke-width="2.2" stroke-opacity="0.75" paint-order="stroke" stroke-linejoin="round">Ηγουμενίτσα</text>
<text x="429" y="257" font-size="11.5" text-anchor="middle" fill="#3a3a3a" stroke="#fff" stroke-width="2.2" stroke-opacity="0.75" paint-order="stroke" stroke-linejoin="round">Κόνιτσα</text>
<text x="436" y="286" font-size="10.5" text-anchor="middle" fill="#2f7d3a" stroke="#fff" stroke-width="2.2" stroke-opacity="0.75" paint-order="stroke" stroke-linejoin="round" font-style="italic">Δρυμός</text>
<text x="437" y="297" font-size="10.5" text-anchor="middle" fill="#2f7d3a" stroke="#fff" stroke-width="2.2" stroke-opacity="0.75" paint-order="stroke" stroke-linejoin="round" font-style="italic">Βίκου-Αώου</text>
<text x="514" y="282" font-size="12.5" text-anchor="middle" fill="#2f7d3a" stroke="#fff" stroke-width="2.2" stroke-opacity="0.75" paint-order="stroke" stroke-linejoin="round" font-style="italic">Εθνικό</text>
<text x="514" y="296" font-size="12.5" text-anchor="middle" fill="#2f7d3a" stroke="#fff" stroke-width="2.2" stroke-opacity="0.75" paint-order="stroke" stroke-linejoin="round" font-style="italic">Πάρκο</text>
<text x="514" y="310" font-size="12.5" text-anchor="middle" fill="#2f7d3a" stroke="#fff" stroke-width="2.2" stroke-opacity="0.75" paint-order="stroke" stroke-linejoin="round" font-style="italic">Πίνδου</text>
<text x="589" y="387" font-size="11.5" text-anchor="middle" fill="#3a3a3a" stroke="#fff" stroke-width="2.2" stroke-opacity="0.75" paint-order="stroke" stroke-linejoin="round">Μέτσοβο</text>
<text x="447" y="418" font-size="11.5" text-anchor="middle" fill="#3a3a3a" stroke="#fff" stroke-width="2.2" stroke-opacity="0.75" paint-order="stroke" stroke-linejoin="round">Ελεούσα</text>
<text x="468" y="439" font-size="13.5" text-anchor="middle" fill="#3a3a3a" stroke="#fff" stroke-width="2.2" stroke-opacity="0.75" paint-order="stroke" stroke-linejoin="round">Ιωάννινα</text>
<text x="480" y="458" font-size="11.5" text-anchor="middle" fill="#3a3a3a" stroke="#fff" stroke-width="2.2" stroke-opacity="0.75" paint-order="stroke" stroke-linejoin="round">Κατσικάς</text>
<text x="344" y="530" font-size="11.5" text-anchor="middle" fill="#3a3a3a" stroke="#fff" stroke-width="2.2" stroke-opacity="0.75" paint-order="stroke" stroke-linejoin="round">Παραμυθιά</text>
<text x="620" y="32" font-size="12.5" text-anchor="middle" fill="#3a3a3a" stroke="#fff" stroke-width="2.2" stroke-opacity="0.75" paint-order="stroke" stroke-linejoin="round">Καστοριά</text>
<text x="611" y="62" font-size="12" text-anchor="middle" fill="#3a3a3a" stroke="#fff" stroke-width="2.2" stroke-opacity="0.75" paint-order="stroke" stroke-linejoin="round">Άργος Ορεστικό</text>
<text x="662" y="129" font-size="11.5" text-anchor="middle" fill="#3a3a3a" stroke="#fff" stroke-width="2.2" stroke-opacity="0.75" paint-order="stroke" stroke-linejoin="round">Νεάπολη</text>
<text x="641" y="153" font-size="11.5" text-anchor="middle" fill="#3a3a3a" stroke="#fff" stroke-width="2.2" stroke-opacity="0.75" paint-order="stroke" stroke-linejoin="round">Τσοτύλι</text>
<text x="280" y="100" font-size="10.5" text-anchor="middle" fill="#2f7d3a" stroke="#fff" stroke-width="2.2" stroke-opacity="0.75" paint-order="stroke" stroke-linejoin="round" font-style="italic">Parku</text>
<rect x="621" y="529" width="22" height="26" rx="3" fill="#6a8bb5" stroke="#fff" stroke-opacity="0.7" stroke-width="1.5"/>
<rect x="630.8" y="533.8" width="3.4" height="2.8" fill="#fff"/><rect x="630.8" y="538.2" width="3.4" height="8.3" fill="#fff"/>
</svg>
</div>
<div id="popup" class="abs"></div>
<svg class="abs" style="left:310px;top:220px" width="40" height="16"><path d="M9.6 3 L20 13.4 L30.4 3 Z" fill="#fff"/></svg>
<svg class="abs" style="left:282px;top:0" width="24" height="18"><path d="M7 4 L15 12 M15 4 L7 12" stroke="#2f6eab" stroke-width="2" stroke-linecap="butt"/></svg>
<table class="ptab">
<tr><td colspan="2" style="text-align:center;color:#cc1f2c;font-style:italic">Automatic Solution</td></tr>
<tr class="l"><td class="k">Or. Time:</td><td class="v">25/05/2019 22:35:25.12 (GMT)</td></tr>
<tr class="d"><td class="k">Local Magnitude (ML) :</td><td class="v">4.0</td></tr>
<tr class="l"><td class="k">Latitude:</td><td class="v">40.0722 N</td></tr>
<tr class="d"><td class="k">Longitude:</td><td class="v">20.4745 E</td></tr>
<tr class="l"><td class="k">Focal Depth:</td><td class="v">10.0 Km</td></tr>
<tr class="d"><td class="k">Location:</td><td class="v">24 Km W from Konitsa</td></tr>
<tr class="l"><td colspan="2" class="v">Click <span style="color:#337ab7">here</span> for detailed event information.</td></tr>
</table>
<div class="abs" style="left:653px;top:3px;width:1px;height:548px;background:#0000aa"></div>
<div class="abs" style="left:655px;top:3px;width:1px;height:548px;background:#0000aa"></div>
<div class="abs" style="left:656px;top:3px;width:246px;height:548px;background:#1e3270"></div>
<div class="abs" style="left:659px;top:3px;width:243px;height:58px;background:#bfffff"></div>
<svg class="abs" style="left:655px;top:3px;width:247px;height:58px" width="247" height="58">
<g transform="translate(0,-3)">
<circle cx="30" cy="9.2" r="7.7" fill="#fff" stroke="#000" stroke-width="2"/>
<path d="M30 23 L34.3 35.2 L47.5 35.5 L37 43.5 L40.8 56.3 L30 48.7 L19.2 56.3 L23 43.5 L12.5 35.5 L25.7 35.2 Z" fill="#fbfbfb" stroke="#808080" stroke-width="1.7" stroke-linejoin="round"/>
<path d="M30 26.5 L33.3 36.4 L43.8 36.7 L35.5 43.1 L38.5 53.2 L30 47.2 L21.5 53.2 L24.5 43.1 L16.2 36.7 L26.7 36.4 Z" fill="none" stroke="#d0d0d0" stroke-width="0.8" stroke-linejoin="round"/>
<circle cx="178" cy="9.7" r="5.6" fill="#f47c20" stroke="#1a1a1a" stroke-width="1"/>
<circle cx="178" cy="27" r="5.6" fill="#ff1111" stroke="#1a1a1a" stroke-width="1"/>
</g>
</svg>
<div class="abs" style="left:713px;top:0px;font-size:11px;line-height:14px;font-weight:bold;letter-spacing:0.45px;color:#000;white-space:nowrap">4.0 &lt; M &lt;= 5.0</div>
<div class="abs" style="left:714px;top:25px;font-size:11px;line-height:14px;font-weight:bold;letter-spacing:0.45px;color:#000;white-space:nowrap">M &gt;= 5.0</div>
<div class="abs" style="left:847px;top:5px;font-size:10px;line-height:12px;letter-spacing:0.2px;color:#112222;white-space:nowrap">60 - 100</div>
<div class="abs" style="left:847px;top:22px;font-size:10px;line-height:12px;letter-spacing:0.2px;color:#112222;white-space:nowrap">&gt;= 100</div>
<div id="list" class="abs">
<div class="row" style="top:-4px">25/05/2019 22:35:25.12, ML=4.0<b class="A">[A]</b></div>
<div class="row" style="top:16px">25/05/2019 22:24:24.97, ML=1.7<b class="A">[A]</b></div>
<div class="row" style="top:36px">25/05/2019 22:11:41.90, ML=1.1<b class="A">[A]</b></div>
<div class="row" style="top:56px">25/05/2019 21:33:05.81, ML=1.8<b class="M">[M]</b></div>
<div class="row" style="top:76px">25/05/2019 21:23:52.82, ML=1.6<b class="M">[M]</b></div>
<div class="row" style="top:96px">25/05/2019 21:20:29.54, ML=1.5<b class="M">[M]</b></div>
<div class="row" style="top:116px">25/05/2019 21:15:31.45, ML=2.1<b class="M">[M]</b></div>
<div class="row" style="top:136px">25/05/2019 20:55:12.53, ML=1.5<b class="M">[M]</b></div>
<div class="row" style="top:156px">25/05/2019 20:11:58.17, ML=1.3<b class="M">[M]</b></div>
<div class="row" style="top:176px">25/05/2019 19:59:43.76, ML=1.6<b class="M">[M]</b></div>
<div class="row" style="top:196px">25/05/2019 19:51:28.26, ML=2.3<b class="M">[M]</b></div>
<div class="row" style="top:216px">25/05/2019 19:17:58.49, ML=2.5<b class="M">[M]</b></div>
<div class="row" style="top:236px">25/05/2019 18:38:52.75, ML=2.0<b class="M">[M]</b></div>
<div class="row" style="top:256px">25/05/2019 18:37:06.91, ML=2.0<b class="M">[M]</b></div>
<div class="row" style="top:276px">25/05/2019 17:51:30.05, ML=2.1<b class="M">[M]</b></div>
<div class="row" style="top:296px">25/05/2019 17:44:02.41, ML=2.1<b class="M">[M]</b></div>
<div class="row" style="top:316px">25/05/2019 17:38:23.36, ML=2.0<b class="M">[M]</b></div>
<div class="row" style="top:336px">25/05/2019 17:13:55.78, ML=2.1<b class="M">[M]</b></div>
<div class="row" style="top:356px">25/05/2019 16:38:38.59, ML=2.4<b class="M">[M]</b></div>
<div class="row" style="top:376px">25/05/2019 16:23:08.51, ML=2.2<b class="M">[M]</b></div>
<div class="row" style="top:396px">25/05/2019 15:53:59.44, ML=1.2<b class="M">[M]</b></div>
<div class="row" style="top:416px">25/05/2019 15:40:23.53, ML=2.0<b class="M">[M]</b></div>
<div class="row" style="top:436px">25/05/2019 13:45:06.50, ML=1.5<b class="M">[M]</b></div>
<div class="row" style="top:456px">25/05/2019 13:40:17.09, ML=3.0<b class="M">[M]</b></div>
<div class="row" style="top:476px">25/05/2019 13:11:58.86, ML=1.8<b class="M">[M]</b></div>
</div>
<div class="abs" style="left:886px;top:61px;width:16px;height:6px;background:#1e3270"></div>
<div class="abs" style="left:886px;top:67px;width:1px;height:484px;background:#fff"></div>
<div class="abs" style="left:887px;top:67px;width:15px;height:484px;background:#f1f1f1"></div>
<div class="abs" style="left:887px;top:95px;width:15px;height:50px;background:#cdcdcd"></div>
<svg class="abs" style="left:887px;top:67px" width="15" height="28"><path d="M4.2 11.3 L7.5 8 L10.8 11.3" fill="none" stroke="#505050" stroke-width="2.2"/></svg>
</body></html>
